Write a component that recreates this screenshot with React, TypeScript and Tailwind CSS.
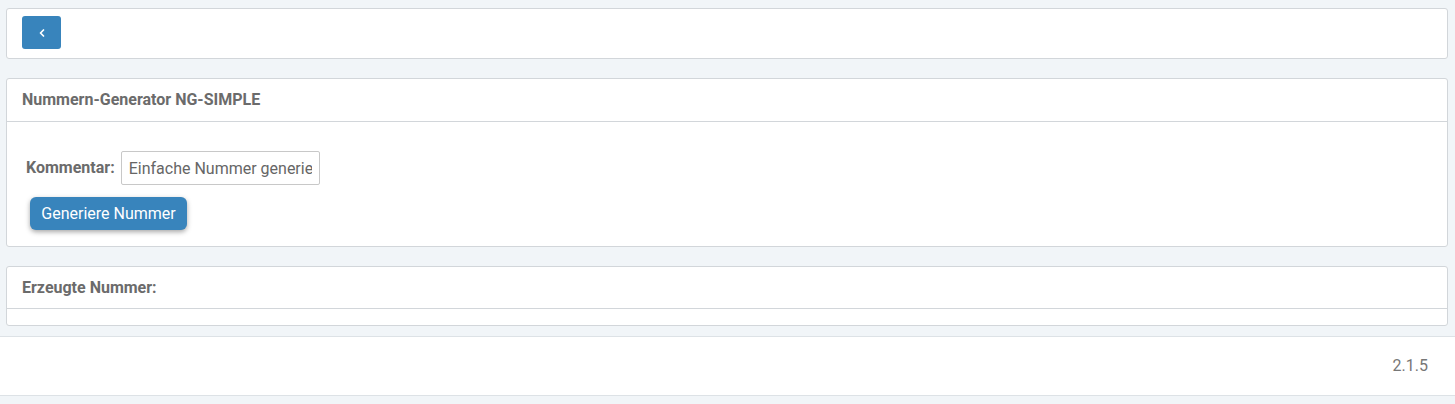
import { ChevronLeft } from 'lucide-react'

const PANEL_CLS = 'bg-white border border-[#d2d6da] rounded-[3px]'
const HEADER_CLS = 'flex items-center px-[15px] border-b border-[#d2d6da] text-[16px] font-bold text-[#6b6b6b]'

export default function App() {
  return (
    <div className="min-h-[404px] bg-[#f1f5f8] pt-[8px] pb-[8px] text-[#555] [font-family:Roboto,'Liberation_Sans',sans-serif]">
      <div className="ml-[6px] mr-[7px] flex flex-col gap-[19px]">
        {/* Toolbar */}
        <div className={`${PANEL_CLS} h-[51px] pt-[7px] px-[15px]`}>
          <button className="w-[39px] h-[33px] rounded-[3px] bg-[#3884bc] flex items-center justify-center text-white">
            <ChevronLeft size={12} strokeWidth={3.5} />
          </button>
        </div>

        {/* Generator */}
        <div className={PANEL_CLS}>
          <div className={`${HEADER_CLS} h-[43px]`}>Nummern-Generator NG-SIMPLE</div>
          <div className="pt-[29px] pb-[16px] px-[19px]">
            <div className="flex items-center gap-[6px]">
              <label className="text-[16px] font-bold text-[#6b6b6b]">Kommentar:</label>
              <input
                defaultValue="Einfache Nummer generieren"
                className="w-[199px] h-[34px] px-[7px] border border-[#c8c8c8] rounded-[2px] text-[16px] text-[#666] outline-none"
              />
            </div>
            <button className="mt-[12px] ml-[4px] w-[157px] h-[33px] rounded-[6px] bg-[#3884bc] text-white text-[16px] shadow-[0_2px_5px_rgba(0,0,0,0.35)]">
              Generiere Nummer
            </button>
          </div>
        </div>

        {/* Result */}
        <div className={PANEL_CLS}>
          <div className={`${HEADER_CLS} h-[42px]`}>Erzeugte Nummer:</div>
          <div className="h-[16px]" />
        </div>
      </div>

      <footer className="mt-[10px] h-[60px] bg-white border-y border-[#dde2e6] flex items-center justify-end pr-[27px] text-[16px] text-[#777]">
        2.1.5
      </footer>
    </div>
  )
}
